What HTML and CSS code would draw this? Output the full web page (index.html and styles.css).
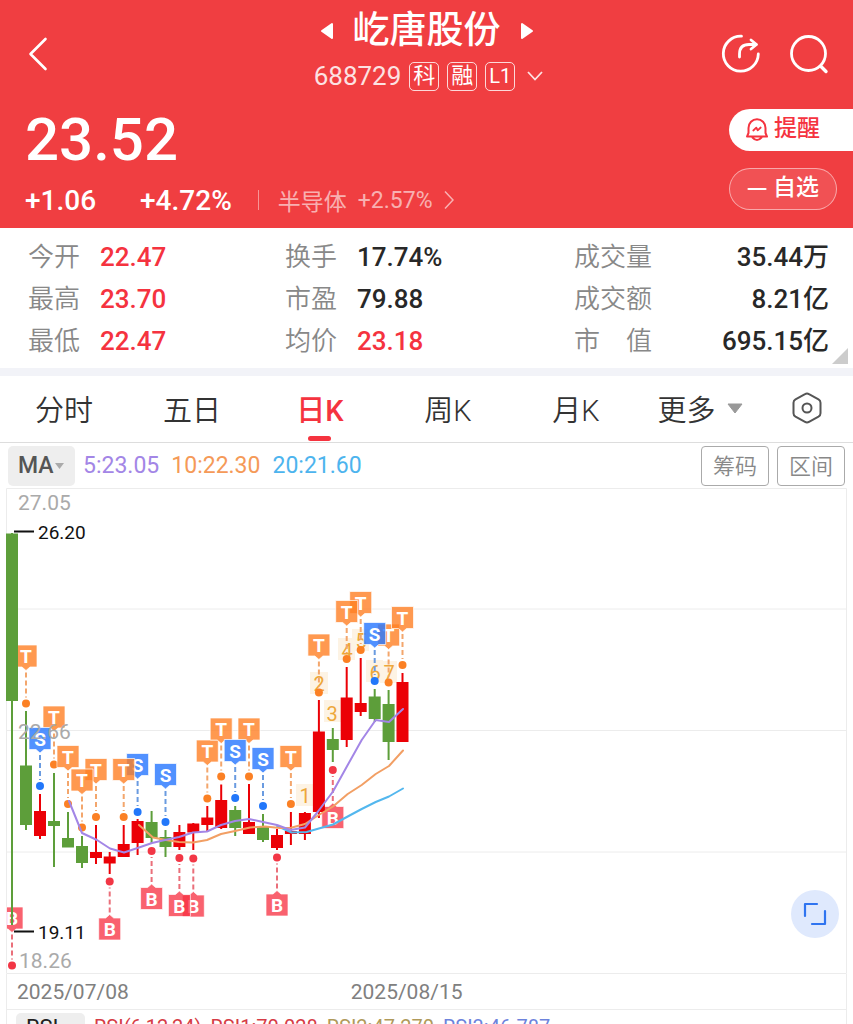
FILE: index.html
```html
<!DOCTYPE html>
<html lang="zh-CN">
<head>
<meta charset="utf-8">
<meta name="viewport" content="width=device-width, initial-scale=1">
<title>屹唐股份 688729</title>
<link rel="stylesheet" href="styles.css">
</head>
<body>
<div class="app">
  <header class="header">
    <div class="topbar">
      <button class="icon-btn back" aria-label="返回">
        <svg width="20" height="34" viewBox="0 0 20 34"><path d="M17.500 2 2.500 17l15 15" fill="none" stroke="#fff" stroke-width="2.600" stroke-linecap="round" stroke-linejoin="round"/></svg>
      </button>
      <div class="title-block">
        <div class="title-row">
          <button class="icon-btn" aria-label="上一只"><svg width="14" height="18" viewBox="0 0 14 18"><path d="M12 2v14L2 9z" fill="#fff" stroke="#fff" stroke-width="2" stroke-linejoin="round"/></svg></button>
          <h1 class="title">屹唐股份</h1>
          <button class="icon-btn" aria-label="下一只"><svg width="14" height="18" viewBox="0 0 14 18"><path d="M2 2v14l10-7z" fill="#fff" stroke="#fff" stroke-width="2" stroke-linejoin="round"/></svg></button>
        </div>
        <div class="code-row">
          <span class="code">688729</span>
          <span class="tag">科</span>
          <span class="tag">融</span>
          <span class="tag tag-latin">L1</span>
          <button class="icon-btn more-tags" aria-label="展开"><svg width="16" height="10" viewBox="0 0 16 10"><path d="M1 1l7 7.500L15 1" fill="none" stroke="#fff" stroke-opacity=".85" stroke-width="1.800"/></svg></button>
        </div>
      </div>
      <div class="actions">
        <button class="icon-btn" aria-label="分享">
          <svg width="40" height="40" viewBox="0 0 40 40" fill="none" stroke="#fff" stroke-width="2.800" stroke-linecap="round" stroke-linejoin="round"><path d="M20.500 2.200A17.500 17.500 0 1 0 37.300 20"/><path d="M18.500 23v-3q0-9.500 9.500-9.500h7"/><path d="M30 6l5.500 4.500-5.500 4.500"/></svg>
        </button>
        <button class="icon-btn" aria-label="搜索">
          <svg width="40" height="40" viewBox="0 0 40 40" fill="none" stroke="#fff" stroke-width="2.800" stroke-linecap="round"><circle cx="19.500" cy="19.500" r="17"/><path d="M32 32.500l5 5" stroke-width="3.400"/></svg>
        </button>
      </div>
    </div>
    <div class="quote">
      <div class="quote-main">
        <div class="price">23.52</div>
        <div class="change-row">
          <span class="change">+1.06</span>
          <span class="change">+4.72%</span>
          <a class="sector" href="#sector"><span class="sector-name">半导体</span><span>+2.57%</span>
            <svg width="10" height="20" viewBox="0 0 10 20"><path d="M1 1.500L9 10l-8 8.500" fill="none" stroke="#fff" stroke-opacity=".6" stroke-width="1.500"/></svg>
          </a>
        </div>
      </div>
      <div class="quote-actions">
        <button class="pill pill-alert">
          <svg width="22" height="24" viewBox="0 0 22 24" fill="none" stroke="#f5333f" stroke-width="2" stroke-linecap="round" stroke-linejoin="round"><path d="M2.500 15V10a8.500 8.800 0 0 1 17 0v5l1.500 3.600H1zM6.500 19.500q4.500 5 9 0"/><path d="M7.300 12.500l3-2.800 1.400 2.600 3-2.800" stroke-width="1.800"/></svg>
          <span>提醒</span>
        </button>
        <button class="pill pill-watch">
          <svg width="20" height="4" viewBox="0 0 20 4"><path d="M1.500 2h17" stroke="#fff" stroke-width="2.200" stroke-linecap="round"/></svg>
          <span>自选</span>
        </button>
      </div>
    </div>
  </header>

  <section class="stats">
    <dl class="stat-col">
      <div class="stat"><dt>今开</dt><dd class="up">22.47</dd></div>
      <div class="stat"><dt>最高</dt><dd class="up">23.70</dd></div>
      <div class="stat"><dt>最低</dt><dd class="up">22.47</dd></div>
    </dl>
    <dl class="stat-col">
      <div class="stat"><dt>换手</dt><dd>17.74%</dd></div>
      <div class="stat"><dt>市盈</dt><dd>79.88</dd></div>
      <div class="stat"><dt>均价</dt><dd class="up">23.18</dd></div>
    </dl>
    <dl class="stat-col stat-col-wide">
      <div class="stat"><dt>成交量</dt><dd>35.44万</dd></div>
      <div class="stat"><dt>成交额</dt><dd>8.21亿</dd></div>
      <div class="stat"><dt>市　值</dt><dd>695.15亿</dd></div>
    </dl>
    <span class="expand-corner"></span>
  </section>

  <nav class="tabs">
    <button class="tab">分时</button>
    <button class="tab">五日</button>
    <button class="tab active">日K</button>
    <button class="tab">周K</button>
    <button class="tab">月K</button>
    <button class="tab tab-more">更多 <svg width="16" height="11" viewBox="0 0 16 11"><path d="M1 1h14L8 10z" fill="#999" stroke="#999" stroke-linejoin="round"/></svg></button>
    <button class="tab" aria-label="设置"><svg width="30" height="32" viewBox="0 0 30 32" fill="none" stroke="#555" stroke-width="2" stroke-linejoin="round"><path d="M13 2.200q2-1.200 4 0l9.500 5.200q2 1.200 2 3.400v10.400q0 2.200-2 3.400L17 29.800q-2 1.200-4 0l-9.500-5.200q-2-1.200-2-3.400V10.800q0-2.200 2-3.400z"/><circle cx="15" cy="16" r="4.500"/></svg></button>
  </nav>

  <div class="indicator">
    <span class="select-wrap">
      <select class="select" aria-label="主图指标"><option>MA</option></select>
      <svg class="caret" width="9" height="6" viewBox="0 0 9 6"><path d="M0 0h9L4.500 6z" fill="#aaa"/></svg>
    </span>
    <span class="ma ma5">5:23.05</span>
    <span class="ma ma10">10:22.30</span>
    <span class="ma ma20">20:21.60</span>
    <span class="indicator-actions">
      <button class="outline-btn">筹码</button>
      <button class="outline-btn">区间</button>
    </span>
  </div>

  <main class="chart">
    <svg class="kline" viewBox="0 488 853 486" role="img" aria-label="日K线图">
      <defs>
        <g id="t"><path class="m-t" d="M-11-58.500h22v22H4L0-33l-4-3.500h-7z"/><path class="l-t" d="M0-31V-6"/><circle r="4" fill="#fb8024"/><text class="m-text" y="-40.500">T</text></g>
        <g id="s"><path class="m-s" d="M-11-58.500h22v22H4L0-33l-4-3.500h-7z"/><path class="l-s" d="M0-31V-6"/><circle r="4" fill="#2277fa"/><text class="m-text" y="-40.500">S</text></g>
        <g id="b"><path class="m-b" d="M-11 58.500h22v-22H4L0 33l-4 3.500h-7z"/><path class="l-b" d="M0 31V6"/><circle r="4" fill="#f23645"/><text class="m-text" y="54.500">B</text></g>
        <g id="b-low"><path class="m-b" d="M-5.500-58.500H11v22H4L0-33l-4-3.500h-1.500z"/><path class="l-b" d="M0-31V-6"/><circle r="4" fill="#f23645"/><text class="m-text" y="-40.500">B</text></g>
      </defs>
      <path class="grid" d="M6.500 973.500v-485h840v485zM6.500 609h840M6.500 730.500h840M6.500 852h840"/>

      <g class="axis">
        <text x="18" y="510">27.05</text>
        <text x="19" y="968">18.26</text>
      </g>

      <g class="count-bg">
        <path d="M296 784h17v22h-17zM310 672h18v22h-18zM324 700h17v22h-17zM338 638h17v22h-17zM352 629h17v22h-17zM366 660h17v22h-17zM380 661h17v22h-17z"/>
      </g>
      <g class="count">
        <text x="305" y="803">1</text><text x="319" y="691">2</text><text x="332" y="721">3</text><text x="347" y="658">4</text><text x="361" y="648">5</text><text x="375" y="680">6</text><text x="389" y="680">7</text>
      </g>

      <g class="markers">
        <use href="#b-low" x="12" y="965.500"/>
        <use href="#t" x="26" y="703.500"/>
        <use href="#t" x="54" y="764.500"/>
        <use href="#s" x="40" y="786"/>
        <use href="#t" x="68" y="804"/>
        <use href="#t" x="96" y="817"/>
        <use href="#t" x="82" y="827.500"/>
        <use href="#b" x="109.700" y="881.500"/>
        <use href="#s" x="137.600" y="812"/>
        <use href="#t" x="123.700" y="817"/>
        <use href="#b" x="151.600" y="851"/>
        <use href="#s" x="165.500" y="822"/>
        <use href="#b" x="193.300" y="858.500"/>
        <use href="#b" x="179.400" y="858"/>
        <use href="#t" x="207.300" y="798.500"/>
        <use href="#t" x="221.200" y="776.500"/>
        <use href="#t" x="249" y="776.500"/>
        <use href="#s" x="235.200" y="798"/>
        <use href="#s" x="263" y="806"/>
        <use href="#b" x="277" y="857.500"/>
        <use href="#t" x="290.900" y="804"/>
        <use href="#t" x="318.900" y="692.500"/>
        <use href="#b" x="332.800" y="770"/>
        <use href="#t" x="360.700" y="650"/>
        <use href="#t" x="346.700" y="659"/>
        <use href="#t" x="388.600" y="682.500"/>
        <use href="#s" x="374.700" y="681"/>
        <use href="#t" x="402.500" y="665"/>
      </g>

      <g class="fall">
        <path class="wick" d="M12 533V925M26 711V830M54 773V867M68 812V847M82 836V868M151.600 811V843M165.500 830V857M235.200 806V836M263 814V842M332.800 728V762M374.700 689V722M388.600 690V760"/>
        <path class="body" d="M12 533.500V701M26 765.500V825M54 821V826M68 838V847.500M82 846V863M151.600 822V838M165.500 837V847M235.200 810V828M263 826V840M332.800 739V750M374.700 696.500V719M388.600 704V742"/>
      </g>
      <g class="rise">
        <path class="wick" d="M40 794V839M96 825V864M109.700 852V874M123.700 825V857M137.600 819V855M179.400 825V850M193.300 823V850M207.300 806V832M221.200 784.500V829M249 784V834M277 829V850M290.900 812V845M304.900 812V840M318.900 700V818M346.700 667V747M360.700 658V716M402.500 673V742"/>
        <path class="body" d="M40 811V836M96 852V858M109.700 856.500V863.500M123.700 844V857M137.600 821V843M179.400 832V847M193.300 823.500V832.500M207.300 817.500V825M221.200 800V828M249 822V834M277 835V848M290.900 831V834M304.900 813V834M318.900 731.500V812M346.700 697.500V740M360.700 703V712M402.500 682V742"/>
      </g>

      <polyline class="line" stroke="#53b7ee" points="277,826 291.700,832.500 306.700,832 318,828.700 333,824.500 347.700,816.500 361.700,809 375.700,802 389,796.500 403,788.500"/>
      <polyline class="line" stroke="#f29f64" points="139,825 153,837.500 166,840 179,842 193,842.500 207,840 221,834 235,831 250,827.500 265,826.500 280,828 291,827.700 305,824 318,815.500 333,806.500 347.700,794 361.700,785 375.700,774 389,766 403,750.500"/>
      <polyline class="line" stroke="#a386e6" points="69,801 82,833 97,840 110,848.500 124,852.500 137.600,848 152,843 165,840 179,837 193,832.500 207,831.500 221,825 235,821 249,819 263,822 277,825 290.500,830 305,827.500 318,811.500 333,791.500 347.700,765 361.700,740 375.700,720 389,722 403,709"/>

      <text class="axis" x="18" y="739">22.66</text>
      <g class="extreme">
        <path d="M14 531.500h20M14 931.500h20"/>
        <text x="38" y="539">26.20</text>
        <text x="38" y="939">19.11</text>
      </g>
    </svg>
    <button class="fullscreen" aria-label="全屏">
      <svg width="24" height="24" viewBox="0 0 24 24" fill="none" stroke="#2f74f0" stroke-width="2.200" stroke-linejoin="round" stroke-linecap="round"><path d="M2 14V2h12M22 9v13H9"/></svg>
    </button>
  </main>

  <div class="dates"><time>2025/07/08</time><time class="date-end">2025/08/15</time></div>

  <div class="rsi">
    <span class="select-wrap">
      <select class="select select-rsi" aria-label="副图指标"><option>RSI</option></select>
      <svg class="caret caret-rsi" width="9" height="6" viewBox="0 0 9 6"><path d="M0 0h9L4.500 6z" fill="#aaa"/></svg>
    </span>
    <span class="r1">RSI(6,12,24)</span>
    <span class="r1">RSI1:70.028</span>
    <span class="r2">RSI2:47.270</span>
    <span class="r3">RSI3:46.787</span>
  </div>
</div>
</body>
</html>
```
FILE: styles.css
```css
* { box-sizing: border-box; }
body {
  margin: 0;
  background: #fff;
  color: #282828;
  font-family: Roboto, "Noto Sans CJK SC", sans-serif;
}
button, select {
  margin: 0;
  padding: 0;
  border: 0;
  background: none;
  color: inherit;
  font: inherit;
}
svg { display: block; }
.app { height: 100vh; overflow: hidden; }

.header { background: #f03e41; color: #fff; height: 228px; }
.topbar {
  display: grid;
  grid-template-columns: 1fr auto 1fr;
  align-items: center;
  height: 108px;
  padding: 0 24px 0 28px;
}
.back { justify-self: start; }
.title-block { display: flex; flex-direction: column; align-items: center; gap: 8px; padding-bottom: 8px; }
.title-row { display: flex; align-items: center; gap: 19px; margin-right: 4px; }
.title { margin: 0; font-size: 37px; line-height: 44px; font-weight: 500; }
.code-row { display: flex; align-items: center; gap: 8px; height: 30px; }
.code { font-size: 26px; line-height: 30px; opacity: .85; }
.tag {
  width: 30px;
  height: 29px;
  border: 1px solid rgba(255, 255, 255, .8);
  border-radius: 5px;
  font-size: 22px;
  line-height: 26px;
  text-align: center;
}
.tag-latin { font-size: 20px; }
.more-tags { padding-left: 4px; }
.actions { display: flex; justify-content: flex-end; gap: 28px; }

.quote { display: flex; justify-content: space-between; }
.quote-main { padding-left: 25px; }
.price { font-size: 60px; line-height: 64px; font-weight: 500; }
.change-row { display: flex; align-items: center; height: 56px; gap: 44px; }
.change { font-size: 28px; font-weight: 500; }
.sector {
  display: flex;
  align-items: center;
  gap: 11px;
  margin-left: -18px;
  padding-left: 19px;
  border-left: 1px solid rgba(255, 255, 255, .45);
  height: 20px;
  color: rgba(255, 255, 255, .6);
  font-size: 23px;
  text-decoration: none;
}
.quote-actions { display: flex; flex-direction: column; gap: 17px; padding-top: 1px; width: 124px; }
.pill {
  display: flex;
  align-items: center;
  gap: 6px;
  height: 42px;
  padding-left: 17px;
  border-radius: 21px;
  font-size: 23px;
  line-height: 32px;
  font-weight: 500;
}
.pill span { padding-bottom: 2px; }
.pill-alert { background: #fff; color: #f5333f; border-radius: 21px 0 0 21px; }
.pill-watch { width: 108px; border: 1px solid rgba(255, 255, 255, .5); background: rgba(255, 255, 255, .1); }

.stats {
  position: relative;
  display: grid;
  grid-template-columns: 257fr 289fr 255fr;
  padding: 8px 24px 6px 28px;
  border-bottom: 8px solid #f2f3f8;
}
.stat-col { margin: 0; }
.stat { display: flex; align-items: center; gap: 20px; height: 42px; font-size: 26px; line-height: 42px; }
.stat dt { color: #888; font-weight: 350; }
.stat dd { margin: 0; font-weight: 500; }
.stat dd.up { color: #f5333f; }
.stat-col-wide .stat { justify-content: space-between; }
.expand-corner {
  position: absolute;
  right: 5px;
  bottom: 4px;
  width: 16px;
  height: 16px;
  background: #ccc;
  clip-path: polygon(100% 0, 100% 100%, 0 100%);
}

.tabs {
  display: grid;
  grid-template-columns: repeat(5, 128fr) 120fr 93fr;
  height: 67px;
  border-bottom: 1px solid #ddd;
}
.tab {
  position: relative;
  display: flex;
  align-items: center;
  justify-content: center;
  padding-bottom: 2px;
  font-size: 29px;
  font-weight: 350;
  color: #333;
}
.tab.active { color: #f5333f; font-weight: 500; }
.tab.active::after {
  content: "";
  position: absolute;
  bottom: 1px;
  left: 50%;
  width: 23px;
  height: 5px;
  margin-left: -12px;
  border-radius: 3px;
  background: #f5333f;
}
.tab-more { gap: 11px; }

.indicator { display: flex; align-items: center; gap: 12px; height: 45px; padding: 0 8px; font-size: 23px; }
.select-wrap { position: relative; display: flex; margin-right: -4px; }
.select {
  appearance: none;
  width: 67px;
  height: 40px;
  padding: 0 10px;
  border-radius: 5px;
  background: #eee;
  color: #555;
  font-weight: 500;
}
.caret { position: absolute; right: 11px; top: 17px; }
.ma5 { color: #a386e6; }
.ma10 { color: #f59a58; }
.ma20 { color: #4db4ee; }
.indicator-actions { display: flex; gap: 8px; margin-left: auto; }
.outline-btn {
  width: 68px;
  height: 40px;
  padding-bottom: 3px;
  border: 1px solid #aaa;
  border-radius: 4px;
  color: #888;
  font-size: 22px;
  font-weight: 350;
}

.chart { position: relative; }
.kline { width: 100%; font-family: Roboto, sans-serif; }
.grid { fill: none; stroke: #ececec; stroke-width: 1; }
.axis { fill: #aaa; font-size: 21px; }
.extreme { fill: #111; font-size: 19px; }
.extreme path { stroke: #111; stroke-width: 2; }
.count-bg { fill: #fdf3e4; }
.count { fill: #eda73a; font-size: 20px; text-anchor: middle; }
.m-t, .m-s, .m-b { stroke: #fff; stroke-opacity: .7; stroke-width: 1; }
.m-t { fill: rgba(255, 127, 36, .8); }
.m-s { fill: rgba(43, 121, 255, .82); }
.m-b { fill: rgba(247, 48, 66, .76); }
.l-t, .l-s, .l-b { stroke-width: 2; stroke-dasharray: 5 3; }
.l-t { stroke: #f3a66c; }
.l-s { stroke: #6a9be0; }
.l-b { stroke: #ea6f7a; }
.m-text { fill: #fff; font-size: 19px; font-weight: 700; text-anchor: middle; }
.wick { fill: none; stroke-width: 2; }
.body { fill: none; stroke-width: 12; }
.fall { stroke: #5d9e3a; }
.rise { stroke: #eb0006; }
.line { fill: none; stroke-width: 2; stroke-linejoin: round; stroke-linecap: round; }
.fullscreen {
  position: absolute;
  right: 14px;
  bottom: 36px;
  display: grid;
  place-items: center;
  width: 48px;
  height: 48px;
  border-radius: 50%;
  background: #dfe9fd;
}

.dates {
  display: flex;
  align-items: center;
  height: 36px;
  margin: 0 6px;
  padding-left: 10px;
  border: solid #ececec;
  border-width: 0 1px 1px;
  color: #808080;
  font-size: 21px;
}
.date-end { margin-left: 222px; }

.rsi {
  display: flex;
  align-items: flex-start;
  gap: 9px;
  margin: 0 6px;
  padding: 3px 9px 0;
  border: solid #ececec;
  border-width: 0 1px;
  font-size: 20px;
  line-height: 28px;
}
.rsi .select-wrap { margin-right: 0; }
.select-rsi { width: 69px; height: 30px; font-size: 22px; font-weight: 400; color: #222; }
.caret-rsi { top: 12px; }
.r1 { color: #d63c46; }
.r2 { color: #b09a5a; }
.r3 { color: #6d83dc; }
```
